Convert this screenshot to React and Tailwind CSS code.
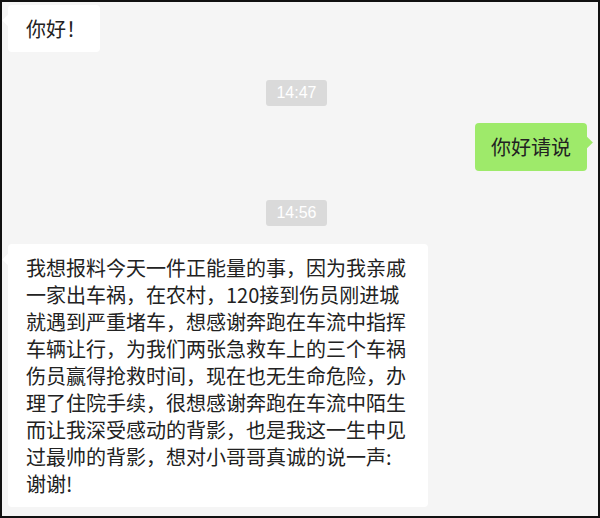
const font = { fontFamily: '"Microsoft YaHei", "Noto Sans CJK SC", sans-serif' };

const lines = [
  '我想报料今天一件正能量的事，因为我亲戚',
  '一家出车祸，在农村，120接到伤员刚进城',
  '就遇到严重堵车，想感谢奔跑在车流中指挥',
  '车辆让行，为我们两张急救车上的三个车祸',
  '伤员赢得抢救时间，现在也无生命危险，办',
  '理了住院手续，很想感谢奔跑在车流中陌生',
  '而让我深受感动的背影，也是我这一生中见',
  '过最帅的背影，想对小哥哥真诚的说一声:',
  '谢谢!',
];

const Time = ({ children }) => (
  <div className="flex justify-center pr-[2px]">
    <span className="bg-[#dadada] text-white text-[16px] leading-[26px] px-[10px] rounded-[3px] font-['Liberation_Sans']">
      {children}
    </span>
  </div>
);

const Left = ({ children, className = '' }) => (
  <div className="flex">
    <div className={`relative bg-white rounded-[4px] text-[20px] leading-[27px] text-[#222] ${className}`}>
      <span className="absolute left-[-4px] top-[11px] w-[9px] h-[9px] bg-white rotate-45"></span>
      <div className="relative">{children}</div>
    </div>
  </div>
);

export default function App() {
  return (
    <div className="w-[600px] h-[518px] bg-[#f5f5f5] border-2 border-[#111] overflow-hidden" style={font}>
      <div className="flex flex-col pl-[6px] pr-[11px] pt-[3px]">
        <Left className="pl-[18px] pr-[14px] py-[10px]">你好！</Left>

        <div className="mt-[28px]">
          <Time>14:47</Time>
        </div>

        <div className="flex justify-end mt-[17px]">
          <div className="relative bg-[#9eea6a] rounded-[4px] text-[20px] leading-[28px] text-[#222] px-[16px] py-[10px]">
            <span className="absolute right-[-4px] top-[15px] w-[9px] h-[9px] bg-[#9eea6a] rotate-45"></span>
            <div className="relative">你好请说</div>
          </div>
        </div>

        <div className="mt-[29px]">
          <Time>14:56</Time>
        </div>

        <div className="mt-[18px]">
          <Left className="w-[420px] px-[18px] py-[10px]">
            {lines.map((l, i) => (
              <div key={i} className="whitespace-nowrap">{l}</div>
            ))}
          </Left>
        </div>
      </div>
    </div>
  );
}
